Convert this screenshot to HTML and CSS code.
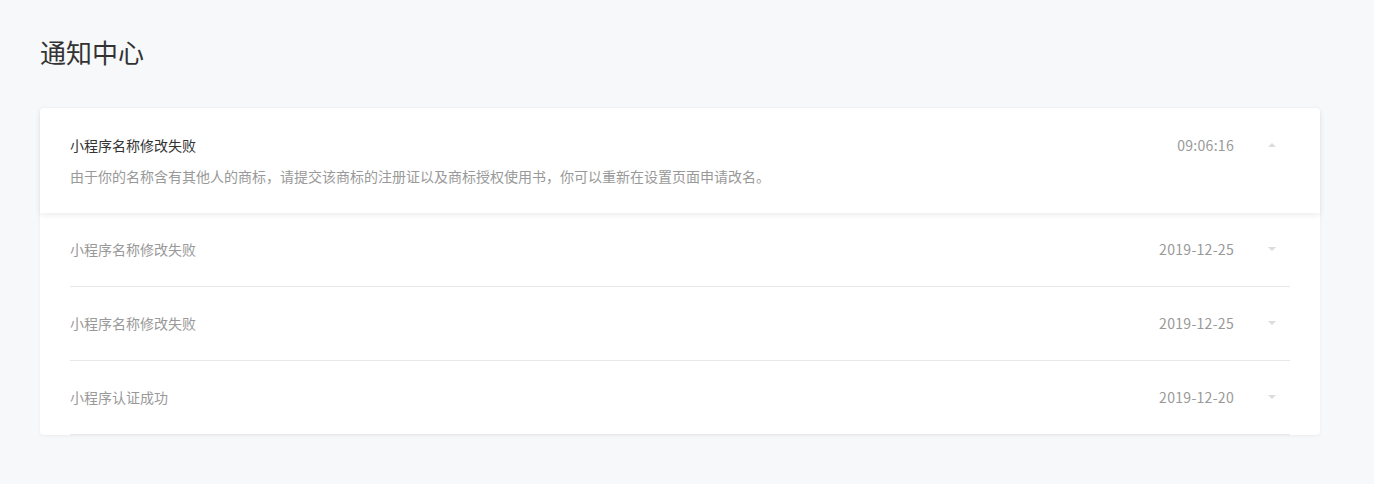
FILE: index.html
```html
<!DOCTYPE html>
<html lang="zh-CN">
<head>
<meta charset="utf-8">
<title>通知中心</title>
<link rel="stylesheet" href="styles.css">
</head>
<body>
<div class="page">
  <h1 class="page-title">通知中心</h1>
  <div class="card">
    <div class="item item-open">
      <div class="item-inner">
        <div class="item-head">
          <span class="item-title">小程序名称修改失败</span>
          <span class="item-time">09:06:16</span>
          <span class="arrow"><i class="tri tri-up"></i></span>
        </div>
        <p class="item-desc">由于你的名称含有其他人的商标，请提交该商标的注册证以及商标授权使用书，你可以重新在设置页面申请改名。</p>
      </div>
    </div>
    <div class="item">
      <div class="item-inner">
        <div class="item-head">
          <span class="item-title">小程序名称修改失败</span>
          <span class="item-time">2019-12-25</span>
          <span class="arrow"><i class="tri tri-down"></i></span>
        </div>
      </div>
    </div>
    <div class="item">
      <div class="item-inner">
        <div class="item-head">
          <span class="item-title">小程序名称修改失败</span>
          <span class="item-time">2019-12-25</span>
          <span class="arrow"><i class="tri tri-down"></i></span>
        </div>
      </div>
    </div>
    <div class="item">
      <div class="item-inner">
        <div class="item-head">
          <span class="item-title">小程序认证成功</span>
          <span class="item-time">2019-12-20</span>
          <span class="arrow"><i class="tri tri-down"></i></span>
        </div>
      </div>
    </div>
  </div>
</div>
</body>
</html>
```

FILE: styles.css
```css
* { box-sizing: border-box; }
html, body {
  margin: 0;
  padding: 0;
  background: #f7f8fa;
  font-family: "Noto Sans CJK SC", "Microsoft YaHei", sans-serif;
  color: #333;
}
.page {
  padding: 34px 54px 50px 40px;
}
.page-title {
  margin: 0;
  font-size: 26px;
  line-height: 36px;
  font-weight: 400;
  color: #333;
}
.card {
  margin-top: 38px;
  background: #fff;
  border-radius: 4px;
  box-shadow: 0 1px 3px rgba(0, 0, 0, 0.06);
}
.item-open {
  position: relative;
  border-radius: 4px 4px 0 0;
  box-shadow: 0 2px 6px rgba(0, 0, 0, 0.08);
}
.item-inner {
  margin: 0 30px;
  border-bottom: 1px solid #e8e8ea;
  height: 74px;
  padding-bottom: 2px;
  display: flex;
  flex-direction: column;
  justify-content: center;
}
.item-open .item-inner {
  border-bottom: none;
  height: 105px;
  justify-content: flex-start;
  padding-top: 27px;
  padding-bottom: 0;
}
.item-head {
  display: flex;
  align-items: center;
  height: 20px;
}
.item-title {
  flex: 1;
  font-size: 14px;
  line-height: 20px;
  color: #999;
}
.item-open .item-title {
  color: #333;
}
.item-time {
  font-size: 14px;
  line-height: 20px;
  color: #999;
  letter-spacing: 0.3px;
}
.arrow {
  width: 56px;
  display: flex;
  justify-content: flex-end;
  padding-right: 14px;
}
.tri {
  display: block;
  width: 0;
  height: 0;
  border-left: 4px solid transparent;
  border-right: 4px solid transparent;
}
.tri-up {
  border-bottom: 4px solid #dcdcdc;
}
.tri-down {
  border-top: 4px solid #dcdcdc;
}
.item-desc {
  margin: 11px 0 0;
  font-size: 14px;
  line-height: 20px;
  color: #999;
}
```
